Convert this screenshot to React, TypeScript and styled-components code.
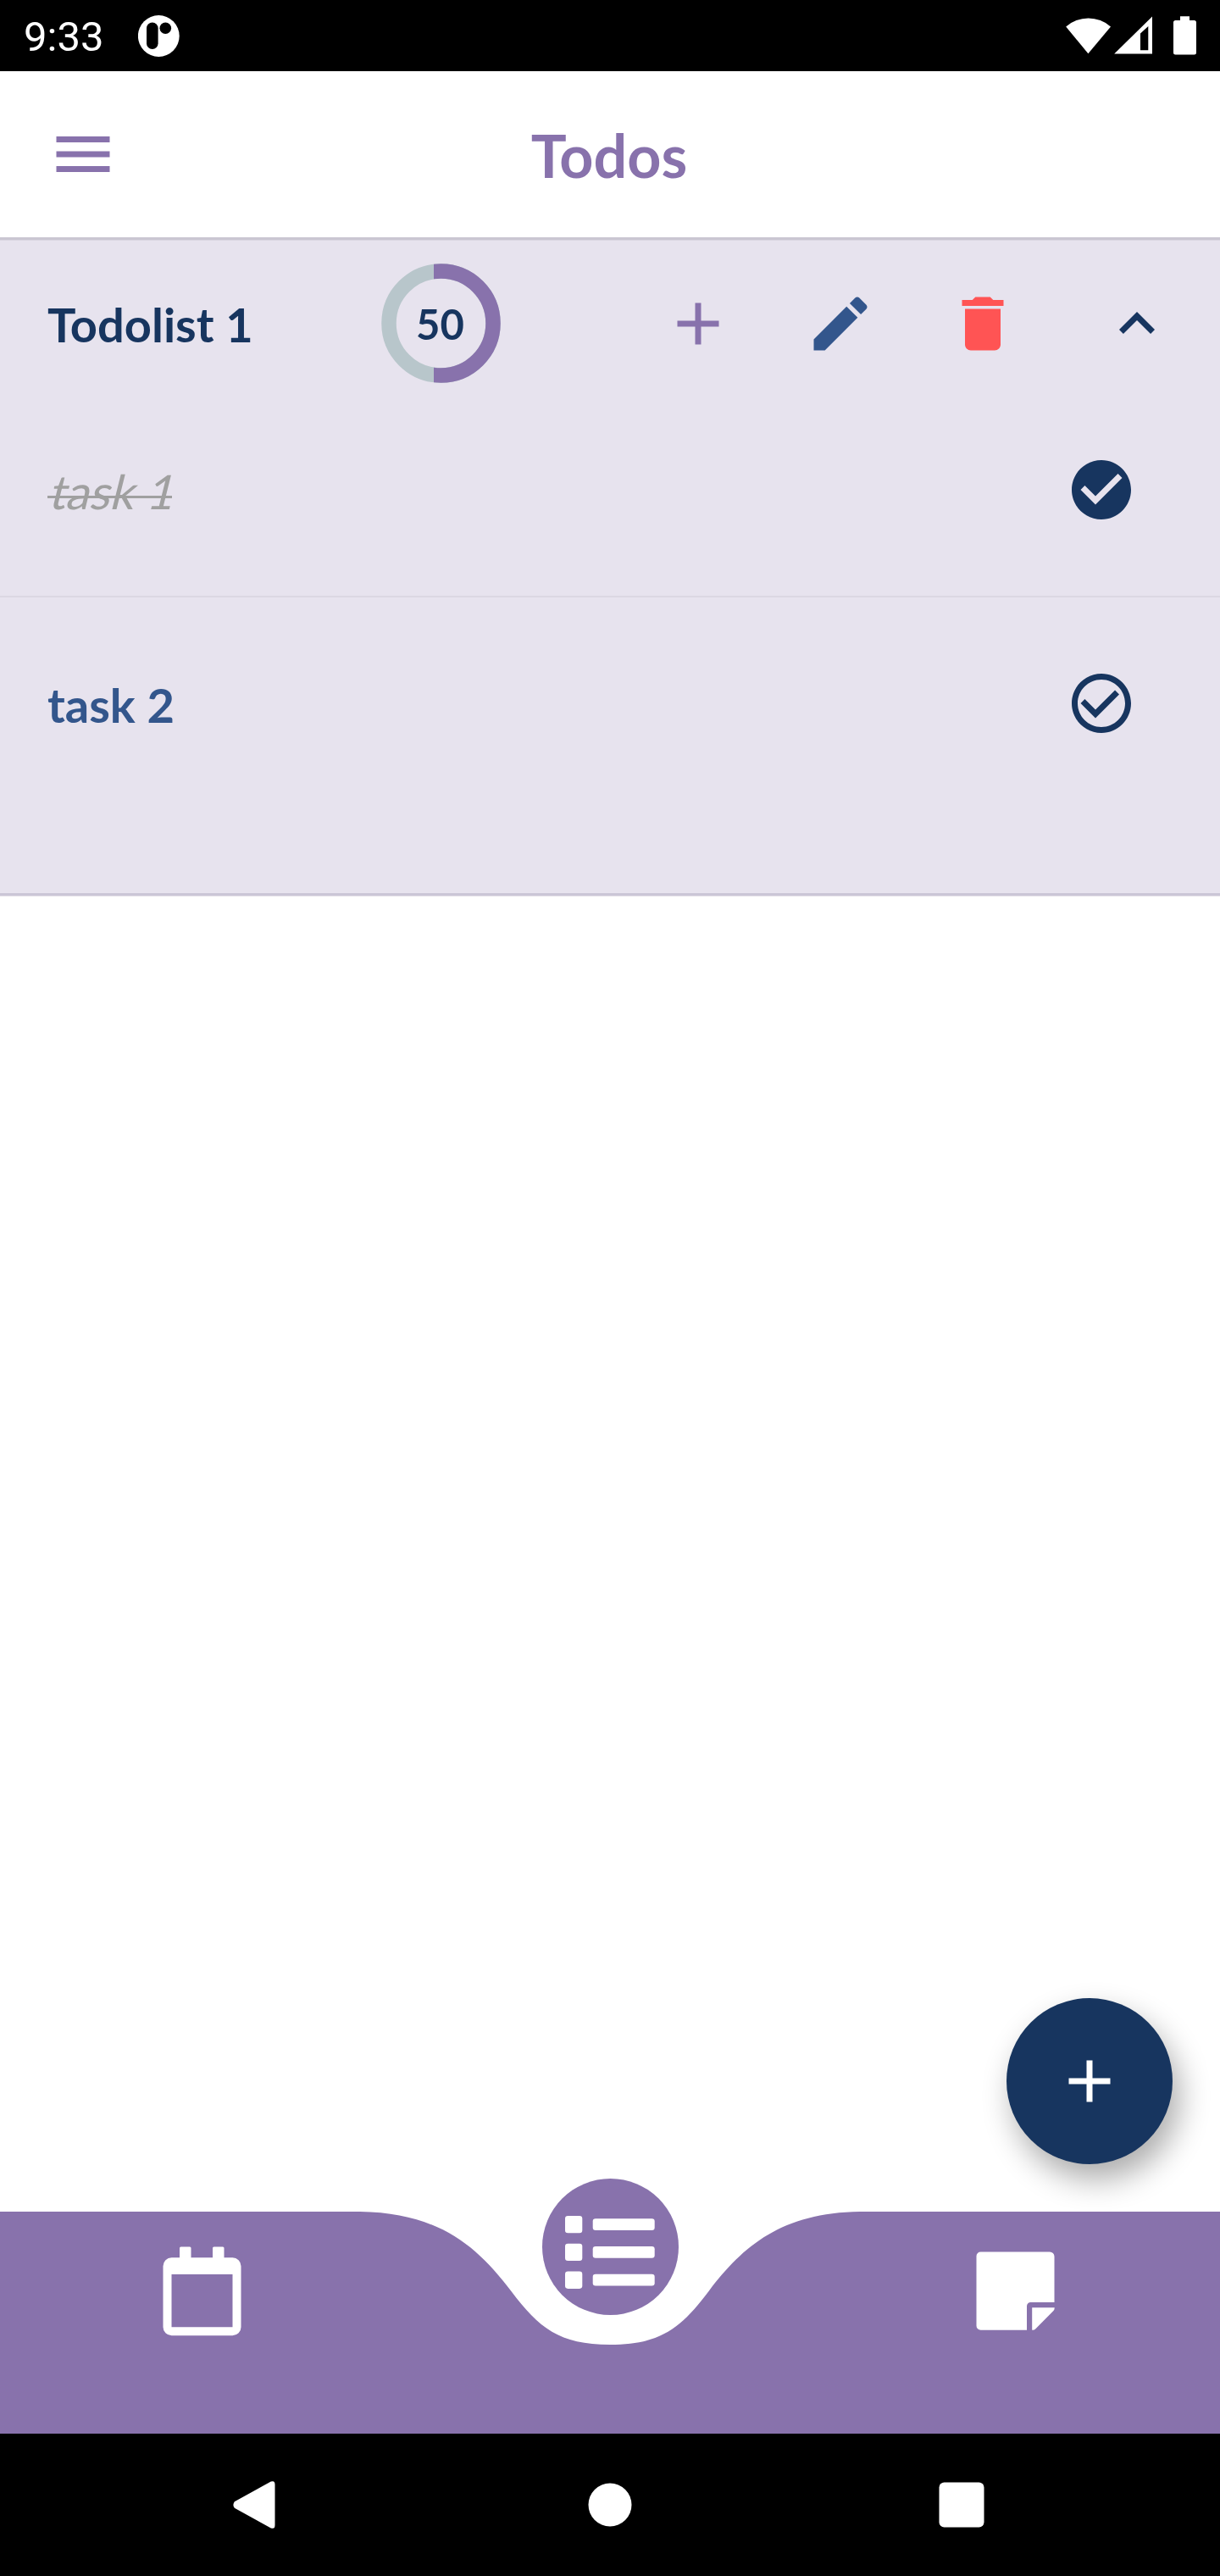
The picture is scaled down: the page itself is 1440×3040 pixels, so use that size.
import React from "react";
import styled, { createGlobalStyle } from "styled-components";

const color = {
  purple: "#8872ac",
  navy: "#17355f",
  blue: "#33568c",
  red: "#ff5454",
  panel: "#e7e3ee",
  track: "#b8c6cb",
  done: "#a0a0a0",
};

const GlobalStyle = createGlobalStyle`
  * { box-sizing: border-box; }
  body { margin: 0; background: #fff; }
  button { border: 0; padding: 0; background: none; color: inherit; font: inherit; }
  svg { display: block; }
`;

const Screen = styled.div`
  width: 1440px;
  height: 3040px;
  display: flex;
  flex-direction: column;
  background: #fff;
  font-family: Lato, "Open Sans", sans-serif;
  overflow: hidden;
`;

const StatusBar = styled.header`
  height: 84px;
  flex: none;
  display: flex;
  align-items: center;
  padding: 0 28px;
  background: #000;
  color: #fff;
`;

const Clock = styled.span`
  width: 135px;
  margin-top: 4px;
  font: 400 49px/50px Roboto, sans-serif;
`;

const StatusIcons = styled.div`
  margin-left: auto;
  display: flex;
`;

const AppBar = styled.div`
  height: 196px;
  flex: none;
  display: grid;
  grid-template-columns: 84px 1fr 86px;
  align-items: center;
  padding: 0 56px;
  color: ${color.purple};
`;

const Title = styled.h1`
  margin: 2px 0 0;
  text-align: center;
  font-size: 70px;
  font-weight: 700;
  line-height: 84px;
`;

const IconButton = styled.button<{ $color: string }>`
  width: 84px;
  height: 84px;
  flex: none;
  color: ${(p) => p.$color};
`;

const Content = styled.main`
  flex: 1;
  position: relative;
`;

const ListCard = styled.section`
  height: 777px;
  background: ${color.panel};
  border-top: 3px solid #cac6d2;
  border-bottom: 3px solid #cbc6d6;
  box-shadow: 0 1px #e6e3ea, inset 0 1px #dad6e1;
`;

const ListHeader = styled.div`
  height: 170px;
  display: flex;
  align-items: center;
  padding: 27px 56px 0;
`;

const ListName = styled.h2`
  width: 394px;
  margin: 3px 0 0;
  font-size: 56px;
  font-weight: 700;
  line-height: 68px;
  color: ${color.navy};
`;

const Gauge = styled.div`
  width: 141px;
  height: 141px;
  display: grid;
  place-items: center;
  & > * { grid-area: 1 / 1; }
`;

const GaugeValue = styled.span`
  margin-right: 2px;
  font-size: 49px;
  font-weight: 700;
  line-height: 58px;
  color: ${color.navy};
`;

const Actions = styled.div`
  margin-left: auto;
  margin-right: 98px;
  display: flex;
  gap: 84px;
`;

const TaskRow = styled.div<{ $divider?: boolean }>`
  height: ${(p) => (p.$divider ? 252 : 250)}px;
  display: flex;
  align-items: center;
  justify-content: space-between;
  padding: 0 98px 0 56px;
  border-bottom: ${(p) => (p.$divider ? "2px solid #dbd7e2" : "0")};
`;

const TaskName = styled.span`
  margin-top: 3px;
  font-size: 56px;
  line-height: 68px;
  font-weight: 700;
  color: ${color.blue};
`;

const DoneTaskName = styled(TaskName)`
  position: relative;
  font-weight: 400;
  color: ${color.done};

  &::after {
    content: "";
    position: absolute;
    left: 0;
    right: 0;
    top: 39px;
    height: 3px;
    background: currentColor;
  }
`;

/* Slants the upright face around its baseline. */
const Slanted = styled.span`
  display: inline-block;
  transform: skewX(-14deg);
  transform-origin: 0 56px;
`;

const Fab = styled.button`
  position: absolute;
  right: 56px;
  bottom: 56px;
  width: 196px;
  height: 196px;
  display: grid;
  place-items: center;
  border-radius: 50%;
  background: ${color.navy};
  color: #fff;
  box-shadow: 8px 18px 36px rgba(0, 0, 0, 0.33);
`;

const TabBar = styled.nav`
  position: relative;
  height: 262.5px;
  flex: none;
  display: grid;
  grid-template-columns: 477px 486px 471px;
  justify-items: center;
  align-items: start;
`;

const NotchedBackground = styled.svg`
  position: absolute;
  inset: 0;
`;

const Tab = styled.button<{ $top: number }>`
  position: relative;
  margin-top: ${(p) => p.$top}px;
  color: #fff;
`;

const ActiveTab = styled(Tab)`
  width: 161px;
  height: 161px;
  display: grid;
  place-items: center;
  border-radius: 50%;
  background: ${color.purple};
  padding-top: 12px;
`;

const SystemNav = styled.footer`
  height: 168px;
  flex: none;
  display: grid;
  grid-template-columns: 600px 240px 590px;
  place-items: center;
  background: #000;
`;

const shapes = {
  menu: "M3 18h18v-2H3v2zm0-5h18v-2H3v2zm0-7v2h18V6H3z",
  add: "M19 13h-6v6h-2v-6H5v-2h6V5h2v6h6v2z",
  edit: "M3 17.25V21h3.75L17.81 9.94l-3.75-3.75L3 17.25zM20.71 7.04c.39-.39.39-1.02 0-1.41l-2.34-2.34c-.39-.39-1.02-.39-1.41 0l-1.83 1.83 3.75 3.75 1.83-1.83z",
  remove: "M6 19c0 1.1.9 2 2 2h8c1.1 0 2-.9 2-2V7H6v12zM19 4h-3.5l-1-1h-5l-1 1H5v2h14V4z",
  collapse: "M12 8l-6 6 1.41 1.41L12 10.83l4.59 4.58L18 14z",
  checked:
    "M12 2C6.48 2 2 6.48 2 12s4.48 10 10 10 10-4.48 10-10S17.52 2 12 2zm-2 15l-5-5 1.41-1.41L10 14.17l7.59-7.59L19 8l-9 9z",
  unchecked:
    "M16.59 7.58L10 14.17l-3.59-3.58L5 12l5 5 8-8zM12 2C6.48 2 2 6.48 2 12s4.48 10 10 10 10-4.48 10-10S17.52 2 12 2zm0 18c-4.42 0-8-3.58-8-8s3.58-8 8-8 8 3.58 8 8-3.58 8-8 8z",
};

const Icon = ({ name }: { name: keyof typeof shapes }) => (
  <svg width="84" height="84" viewBox="0 0 24 24" fill="currentColor">
    <path d={shapes[name]} />
  </svg>
);

const tasks = [
  { id: 1, name: "task 1", done: true },
  { id: 2, name: "task 2", done: false },
];

export default function App() {
  return (
    <Screen>
      <GlobalStyle />
      <StatusBar>
        <Clock>9:33</Clock>
        <svg width="49" height="49" viewBox="0 0 49 49">
          <circle cx="24.3" cy="24.5" r="24.4" fill="#fff" />
          <rect x="10" y="8.5" width="13.6" height="31.5" rx="6.8" />
          <circle cx="32.3" cy="15.2" r="6.8" />
        </svg>
        <StatusIcons>
          <svg width="154" height="84" viewBox="1258 0 154 84" fill="#fff">
            <path d="M1258.200 31.500A40 40 0 0 1 1311 31.500L1284.400 63.300z" />
            <path
              fillRule="evenodd"
              d="M1360 19.500V63.600H1315.200zM1346 39.500V59.300H1355.300V31z"
            />
            <path d="M1393 19.300h11v4.700h5.500a2.500 2.500 0 0 1 2.500 2.500v35.500a2.500 2.500 0 0 1-2.500 2.500h-22a2.500 2.500 0 0 1-2.500-2.500v-35.500a2.500 2.500 0 0 1 2.500-2.500h5.500z" />
          </svg>
        </StatusIcons>
      </StatusBar>

      <AppBar>
        <IconButton $color={color.purple} aria-label="Menu">
          <Icon name="menu" />
        </IconButton>
        <Title>Todos</Title>
      </AppBar>

      <Content>
        <ListCard>
          <ListHeader>
            <ListName>Todolist 1</ListName>
            <Gauge>
              <svg width="141" height="141" viewBox="0 0 141 141" fill="none" strokeWidth="17.5">
                <clipPath id="progress">
                  <rect x="62" y="0" width="79" height="141" />
                </clipPath>
                <circle cx="70.500" cy="70.500" r="61.500" stroke={color.track} />
                <circle
                  cx="70.500"
                  cy="70.500"
                  r="61.500"
                  stroke={color.purple}
                  clipPath="url(#progress)"
                />
              </svg>
              <GaugeValue>50</GaugeValue>
            </Gauge>
            <Actions>
              <IconButton $color={color.purple} aria-label="Add task">
                <Icon name="add" />
              </IconButton>
              <IconButton $color={color.blue} aria-label="Edit list">
                <Icon name="edit" />
              </IconButton>
              <IconButton $color={color.red} aria-label="Delete list">
                <Icon name="remove" />
              </IconButton>
            </Actions>
            <IconButton $color={color.navy} aria-label="Collapse list">
              <Icon name="collapse" />
            </IconButton>
          </ListHeader>
          {tasks.map((task, i) => (
            <TaskRow key={task.id} $divider={i < tasks.length - 1}>
              {task.done ? (
                <DoneTaskName>
                  <Slanted>{task.name}</Slanted>
                </DoneTaskName>
              ) : (
                <TaskName>{task.name}</TaskName>
              )}
              <IconButton $color={color.navy} aria-label={task.name}>
                <Icon name={task.done ? "checked" : "unchecked"} />
              </IconButton>
            </TaskRow>
          ))}
        </ListCard>
        <Fab aria-label="Add list">
          <Icon name="add" />
        </Fab>
      </Content>

      <TabBar>
        <NotchedBackground width="1440" height="262.5" viewBox="0 2609.5 1440 262.500">
          <path
            fill={color.purple}
            d="M0 2609.500H425C517 2611 562.300 2649.200 603.300 2703.300C636.300 2746.900 660 2766.500 720 2766.500C780 2766.500 803.700 2746.900 836.700 2703.300C877.700 2649.200 923 2611 1015 2609.500H1440V2872H0z"
          />
        </NotchedBackground>
        <Tab $top={41.5} aria-label="Calendar">
          <svg width="93" height="106" viewBox="0 0 93 106" fill="currentColor">
            <path d="M20 14V2a1.500 1.500 0 0 1 1.500-1.500h10.500a1.500 1.500 0 0 1 1.500 1.500V14zM59 14V2a1.500 1.500 0 0 1 1.500-1.500h10.500a1.500 1.500 0 0 1 1.500 1.500V14z" />
            <path
              fillRule="evenodd"
              d="M10.500 13.300h72a10 10 0 0 1 10 10v72a10 10 0 0 1-10 10h-72a10 10 0 0 1-10-10v-72a10 10 0 0 1 10-10zM10.500 33v62.300h72V33z"
            />
          </svg>
        </Tab>
        <ActiveTab $top={-38.5} aria-label="Todos">
          <svg width="106" height="86" viewBox="0 0 106 86" fill="currentColor">
            {[0, 32.8, 65.6].map((y) => (
              <React.Fragment key={y}>
                <rect x="0" y={y} width="20.300" height="20.300" rx="3.300" />
                <rect x="32.700" y={y + 3.2} width="73" height="13.800" rx="3.300" />
              </React.Fragment>
            ))}
          </svg>
        </ActiveTab>
        <Tab $top={47.5} aria-label="Notes">
          <svg width="93" height="93" viewBox="0 0 93 93" fill="currentColor">
            <path d="M5.500.5H87a5.500 5.500 0 0 1 5.500 5.500V60H64.500a4.500 4.500 0 0 0-4.500 4.500V92.800H5.500a5 5 0 0 1-5-5V5.500a5 5 0 0 1 5-5z" />
            <path d="M66.200 66.200H92.700a5 5 0 0 1-1.500 4L70.400 91.300a5 5 0 0 1-4.200 1.500z" />
          </svg>
        </Tab>
      </TabBar>

      <SystemNav>
        <svg width="50" height="58" viewBox="0 0 50 58" fill="#fff">
          <path d="M1.800 25.200L44.800 1.600Q49.500-.2 49.500 5V53Q49.500 58.200 44.800 56.400L1.800 32.800Q-1 29 1.800 25.200z" />
        </svg>
        <svg width="52" height="52" viewBox="0 0 52 52" fill="#fff">
          <circle cx="26" cy="26" r="25.500" />
        </svg>
        <svg width="54" height="54" viewBox="0 0 54 54" fill="#fff">
          <rect x=".5" y=".5" width="53" height="53" rx="6" />
        </svg>
      </SystemNav>
    </Screen>
  );
}
